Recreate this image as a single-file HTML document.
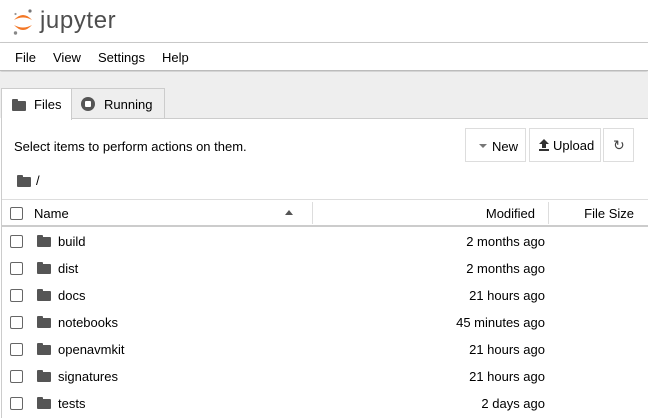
<!DOCTYPE html>
<html><head><meta charset="utf-8"><style>
*{box-sizing:border-box;margin:0;padding:0}
body{width:648px;height:417px;overflow:hidden;background:#fff;font-family:"Liberation Sans",sans-serif;font-size:13px;color:#000;position:relative}
.a{position:absolute}
.hdr{left:0;top:0;width:648px;height:43px;border-bottom:1px solid #ccc}
.menu{top:43px;left:0;width:648px;height:28px;border-bottom:1px solid #bbb;box-shadow:0 1px 2px rgba(0,0,0,.25)}
.menu span{position:absolute;top:7px}
.gray{top:72px;left:0;width:648px;height:46px;background:#eee}
.tab{top:88px;height:31px;border:1px solid #ccc;border-bottom:none}
.panel{top:118px;left:1px;width:647px;height:300px;border-left:1px solid #ccc;border-top:1px solid #ccc;background:#fff}
.btn{top:128px;height:34px;border:1px solid #ddd;background:#fff}
.cb{width:13px;height:13px;border:1px solid #666;border-radius:2px;background:#fff}
.fold{width:14px;height:10px;background:#555;border-radius:1px}
.fold:before{content:"";position:absolute;left:0;top:-2px;width:6px;height:3px;background:#555;border-radius:1px 1px 0 0}
.r{text-align:right;white-space:nowrap}
</style></head><body>
<div class="a hdr">
<svg class="a" style="left:12px;top:8px" width="22" height="28" viewBox="0 0 22 28">
<path d="M2 12 Q11 2 20 12 Q11 7 2 12Z" fill="#f37726"/>
<path d="M2 17 Q11 27 20 17 Q11 22 2 17Z" fill="#f37726"/>
<circle cx="18" cy="3" r="1.6" fill="#767677"/><circle cx="3.5" cy="25" r="1.7" fill="#888"/><circle cx="3.5" cy="6" r="1.1" fill="#999"/>
</svg>
<div class="a" style="left:40px;top:7px;font-size:24px;color:#4e4e4e;letter-spacing:0.6px">jupyter</div>
</div>
<div class="a menu"><span style="left:15px">File</span><span style="left:53px">View</span><span style="left:98px">Settings</span><span style="left:162px">Help</span></div>
<div class="a gray"></div>
<div class="a tab" style="left:1px;width:71px;background:#fff;z-index:2;height:32px">
<div class="a fold" style="left:10px;top:12px"></div><span class="a" style="left:32px;top:8px">Files</span></div>
<div class="a tab" style="left:71px;width:94px;background:#eee">
<div class="a" style="left:9px;top:8px;width:14px;height:14px;border-radius:50%;background:#555"></div>
<div class="a" style="left:13px;top:12px;width:6px;height:6px;background:#fff;border-radius:1px"></div>
<span class="a" style="left:32px;top:8px">Running</span></div>
<div class="a panel"></div>
<div class="a" style="left:14px;top:139px">Select items to perform actions on them.</div>
<div class="a btn" style="left:465px;width:61px"><span class="a" style="left:13px;top:15px;border:4px solid transparent;border-top:4px solid #777;border-bottom:none"></span><span class="a" style="left:26px;top:10px">New</span></div>
<div class="a btn" style="left:529px;width:72px"><svg class="a" style="left:9px;top:10px" width="10" height="12"><path d="M5 0L10 5H7V9H3V5H0Z M0 10H10V12H0Z" fill="#333"/></svg><span class="a" style="left:23px;top:9px">Upload</span></div>
<div class="a btn" style="left:603px;width:31px"><span class="a" style="left:9px;top:8px;font-size:14px;color:#444">&#x21bb;</span></div>
<div class="a fold" style="left:17px;top:177px"></div><span class="a" style="left:36px;top:173px">/</span>
<div class="a" style="left:2px;top:199px;width:646px;height:28px;border-top:1px solid #ddd;border-bottom:2px solid #ccc"></div>
<div class="a cb" style="left:10px;top:207px"></div>
<span class="a" style="left:34px;top:206px">Name</span>
<span class="a" style="left:285px;top:210px;border:4px solid transparent;border-bottom:5px solid #555;border-top:none"></span>
<div class="a" style="left:312px;top:202px;width:1px;height:22px;background:#ddd"></div>
<div class="a" style="left:548px;top:202px;width:1px;height:22px;background:#ddd"></div>
<span class="a r" style="right:113px;top:206px">Modified</span>
<span class="a r" style="right:14px;top:206px">File Size</span>
<div class="a" style="top:228px;left:0;width:648px">
<div class="a cb" style="left:10px;top:7px"></div><div class="a fold" style="left:37px;top:9px"></div><span class="a" style="left:58px;top:6px">build</span><span class="a r" style="right:103px;top:6px">2 months ago</span>
</div>
<div class="a" style="top:255px;left:0;width:648px">
<div class="a cb" style="left:10px;top:7px"></div><div class="a fold" style="left:37px;top:9px"></div><span class="a" style="left:58px;top:6px">dist</span><span class="a r" style="right:103px;top:6px">2 months ago</span>
</div>
<div class="a" style="top:282px;left:0;width:648px">
<div class="a cb" style="left:10px;top:7px"></div><div class="a fold" style="left:37px;top:9px"></div><span class="a" style="left:58px;top:6px">docs</span><span class="a r" style="right:103px;top:6px">21 hours ago</span>
</div>
<div class="a" style="top:309px;left:0;width:648px">
<div class="a cb" style="left:10px;top:7px"></div><div class="a fold" style="left:37px;top:9px"></div><span class="a" style="left:58px;top:6px">notebooks</span><span class="a r" style="right:103px;top:6px">45 minutes ago</span>
</div>
<div class="a" style="top:336px;left:0;width:648px">
<div class="a cb" style="left:10px;top:7px"></div><div class="a fold" style="left:37px;top:9px"></div><span class="a" style="left:58px;top:6px">openavmkit</span><span class="a r" style="right:103px;top:6px">21 hours ago</span>
</div>
<div class="a" style="top:363px;left:0;width:648px">
<div class="a cb" style="left:10px;top:7px"></div><div class="a fold" style="left:37px;top:9px"></div><span class="a" style="left:58px;top:6px">signatures</span><span class="a r" style="right:103px;top:6px">21 hours ago</span>
</div>
<div class="a" style="top:390px;left:0;width:648px">
<div class="a cb" style="left:10px;top:7px"></div><div class="a fold" style="left:37px;top:9px"></div><span class="a" style="left:58px;top:6px">tests</span><span class="a r" style="right:103px;top:6px">2 days ago</span>
</div>
</body></html>
